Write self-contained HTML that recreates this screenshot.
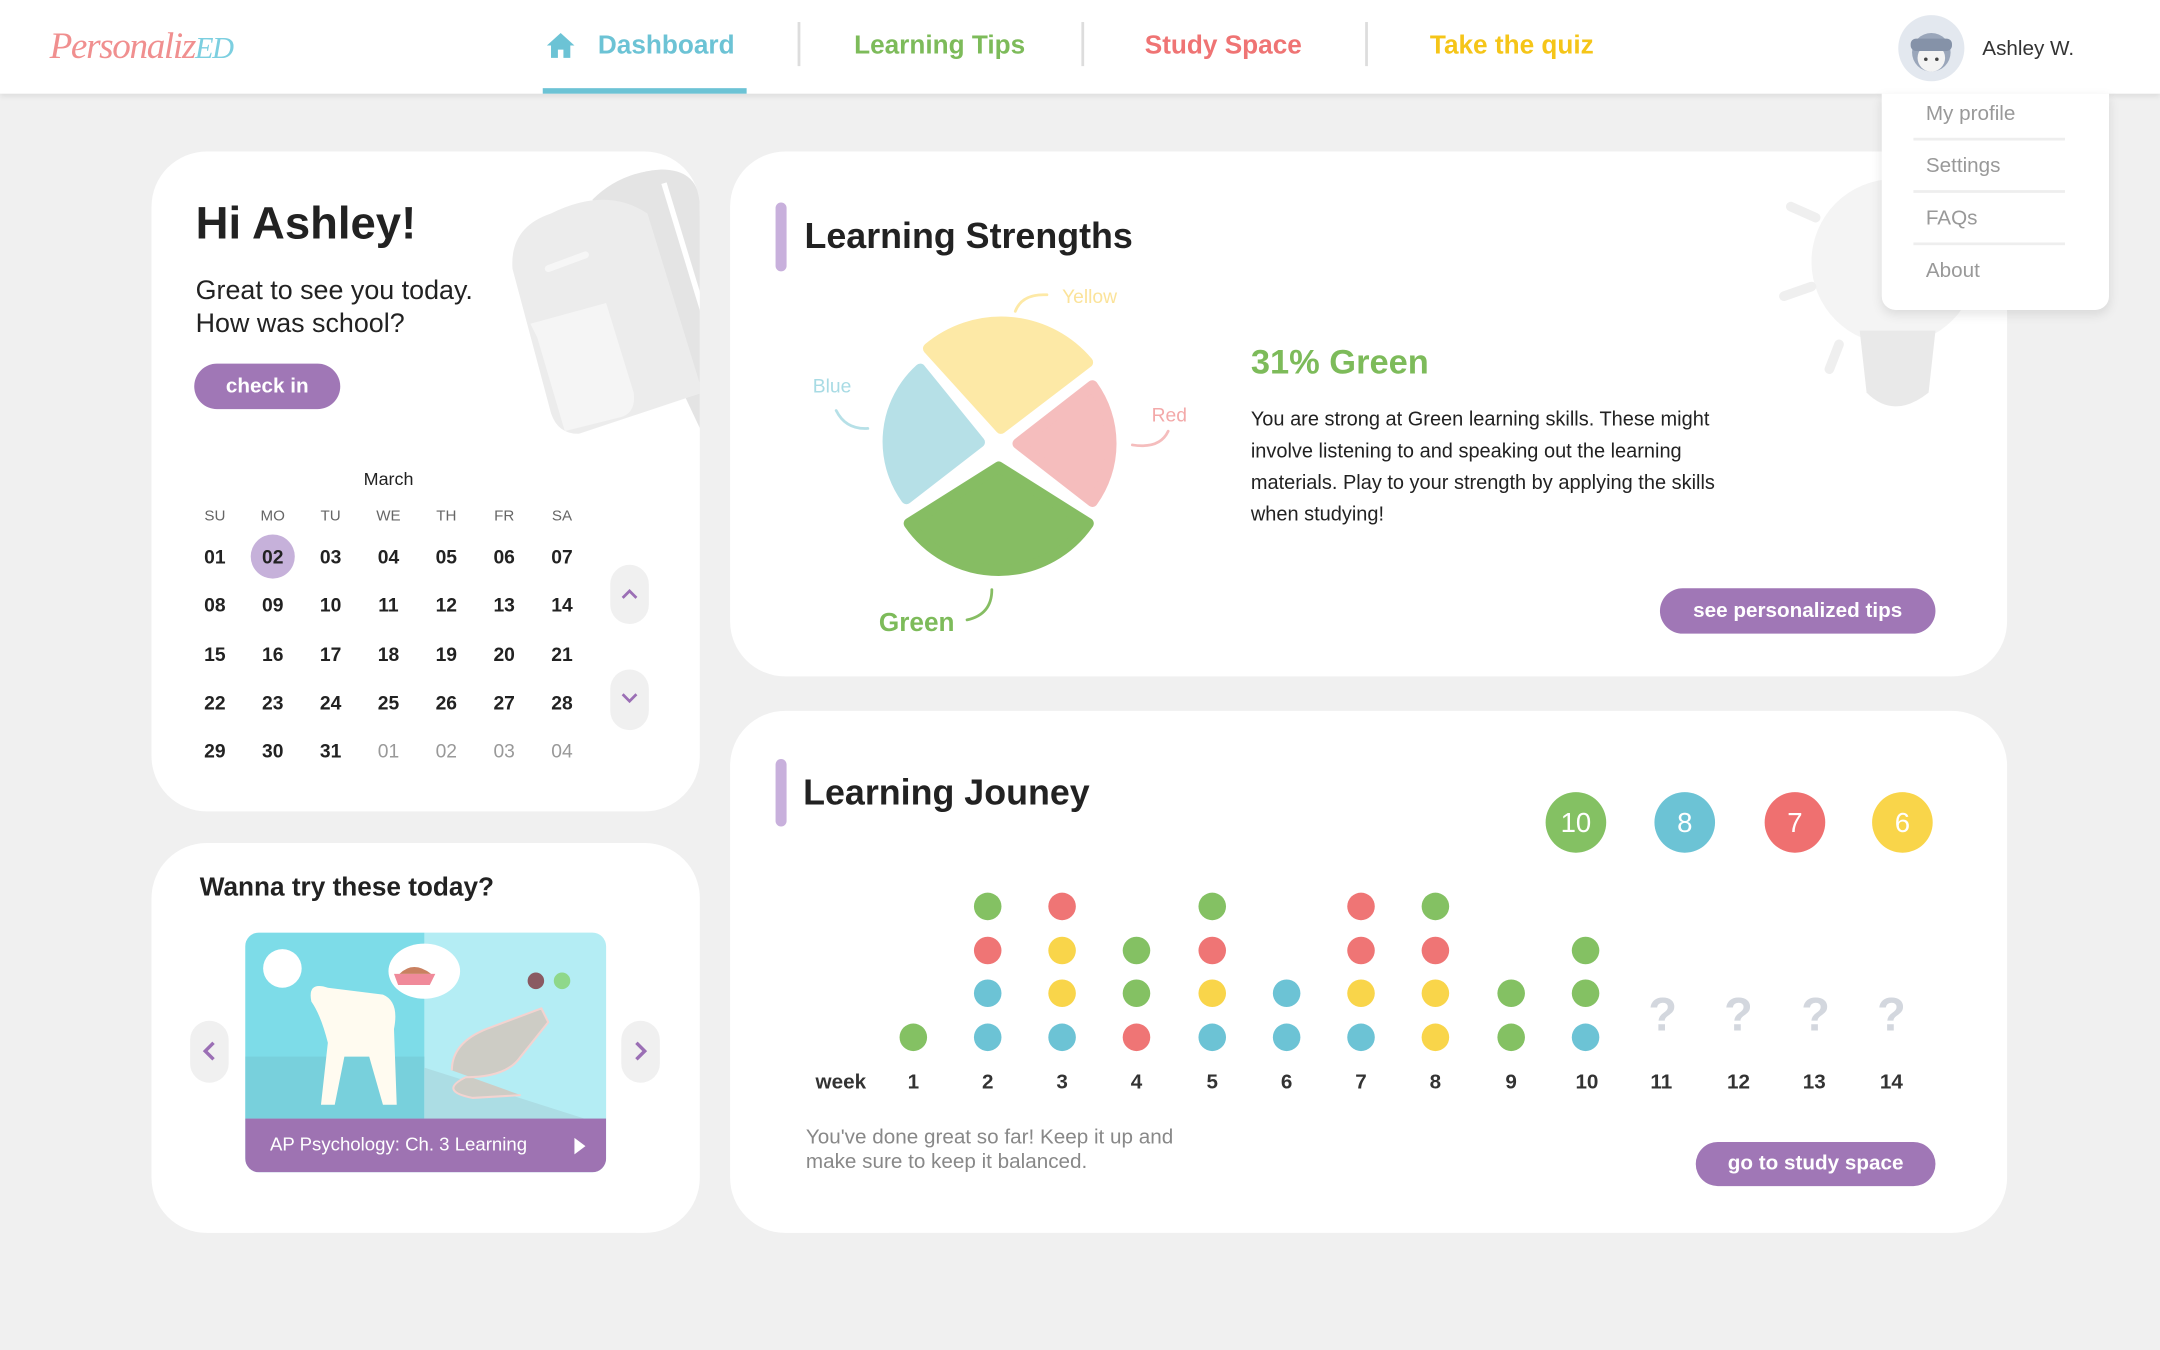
<!DOCTYPE html>
<html><head><meta charset="utf-8">
<style>
*{margin:0;padding:0;box-sizing:border-box}
html,body{width:2160px;height:1350px;overflow:hidden;background:#f0f0f0;font-family:"Liberation Sans",sans-serif}
#w{position:absolute;left:0;top:0;width:1568px;height:980px;transform:scale(1.37755);transform-origin:0 0}
.a{position:absolute;white-space:nowrap}
.card{position:absolute;background:#fff;border-radius:40px;overflow:hidden}
.btn{position:absolute;background:#a077b6;color:#fff;border-radius:17px;text-align:center;font-size:15px;font-weight:bold}
.cal{position:absolute;width:30px;text-align:center;font-size:14px;color:#222;font-weight:bold}
.dh{position:absolute;width:30px;text-align:center;font-size:11px;color:#666}
.wk{position:absolute;width:30px;text-align:center;font-size:15px;color:#333;font-weight:bold;top:777px}
.q{position:absolute;width:30px;text-align:center;font-size:34px;color:#d3d7de;font-weight:bold;top:718px}
</style></head><body><div id="w">

<!-- header -->
<div class="a" style="left:0;top:0;width:1568px;height:68px;background:#fff;box-shadow:0 2px 4px rgba(0,0,0,.08)"></div>
<div class="a" style="left:36px;top:18px;font-size:27px;color:#f08f8f;font-family:'Liberation Serif',serif;font-style:italic;letter-spacing:-1px">Personali<span style="color:#f08f8f">z</span><span style="color:#7ccfe0;font-size:22px">ED</span></div>
<svg class="a" style="left:396px;top:23px" width="22" height="20" viewBox="0 0 22 20"><path d="M11 1 L1 10 H4 V19 H9 V13 H13 V19 H18 V10 H21 Z" fill="#6cc3d5"/></svg>
<div class="a" style="left:434px;top:23px;font-size:19px;color:#6cc3d5;font-weight:bold">Dashboard</div>
<div class="a" style="left:394px;top:64px;width:148px;height:4px;background:#6cc3d5"></div>
<div class="a" style="left:579px;top:16px;width:2px;height:32px;background:#ddd"></div>
<div class="a" style="left:785px;top:16px;width:2px;height:32px;background:#ddd"></div>
<div class="a" style="left:991px;top:16px;width:2px;height:32px;background:#ddd"></div>
<div class="a" style="left:620px;top:23px;font-size:19px;color:#7dbb5a;font-weight:bold">Learning Tips</div>
<div class="a" style="left:831px;top:23px;font-size:19px;color:#ef7474;font-weight:bold">Study Space</div>
<div class="a" style="left:1038px;top:23px;font-size:19px;color:#f5c518;font-weight:bold">Take the quiz</div>
<svg class="a" style="left:1377px;top:10px" width="50" height="50" viewBox="0 0 50 50"><circle cx="25" cy="25" r="24" fill="#e3e8ef"/><circle cx="25" cy="28" r="14" fill="#9aa6ba"/><circle cx="25" cy="32" r="10" fill="#f3f3f3"/><rect x="10" y="18" width="30" height="9" rx="4" fill="#8592a8"/><circle cx="21" cy="33" r="1.3" fill="#444"/><circle cx="29" cy="33" r="1.3" fill="#444"/></svg>
<div class="a" style="left:1439px;top:27px;font-size:15px;color:#333">Ashley W.</div>

<!-- card 1 -->
<div class="card" style="left:110px;top:110px;width:398px;height:479px">
 <svg class="a" style="left:260px;top:5px" width="140" height="200" viewBox="0 0 140 200"><path d="M60 30 Q80 10 110 8 Q135 8 138 30 L140 200 Z" fill="#e4e4e4"/><path d="M30 40 Q70 20 100 40 L140 170 L50 200 Q35 200 30 185 L2 80 Q0 50 30 40 Z" fill="#ececec"/><path d="M15 120 L70 105 L90 170 Q92 185 80 188 L40 198 L20 130 Z" fill="#f5f5f5"/><path d="M28 80 L55 70" stroke="#f6f6f6" stroke-width="5" stroke-linecap="round"/><path d="M112 18 L140 110" stroke="#fff" stroke-width="4"/></svg>
 <div class="a" style="left:32px;top:33px;font-size:33px;color:#222;font-weight:bold">Hi Ashley!</div>
 <div class="a" style="left:32px;top:89px;font-size:19.5px;color:#222;line-height:24px">Great to see you today.<br>How was school?</div>
</div>
<div class="btn" style="left:141px;top:264px;width:106px;height:33px;line-height:33px">check in</div>
<div class="a" style="left:264px;top:340px;font-size:13px;color:#222">March</div>
<div class="dh" style="left:141px;top:369px">SU</div><div class="dh" style="left:183px;top:369px">MO</div><div class="dh" style="left:225px;top:369px">TU</div><div class="dh" style="left:267px;top:369px">WE</div><div class="dh" style="left:309px;top:369px">TH</div><div class="dh" style="left:351px;top:369px">FR</div><div class="dh" style="left:393px;top:369px">SA</div>
<div class="a" style="left:182px;top:388px;width:32px;height:32px;border-radius:50%;background:#c6b1da"></div>
<div class="cal" style="left:141px;top:396px">01</div><div class="cal" style="left:183px;top:396px">02</div><div class="cal" style="left:225px;top:396px">03</div><div class="cal" style="left:267px;top:396px">04</div><div class="cal" style="left:309px;top:396px">05</div><div class="cal" style="left:351px;top:396px">06</div><div class="cal" style="left:393px;top:396px">07</div>
<div class="cal" style="left:141px;top:431px">08</div><div class="cal" style="left:183px;top:431px">09</div><div class="cal" style="left:225px;top:431px">10</div><div class="cal" style="left:267px;top:431px">11</div><div class="cal" style="left:309px;top:431px">12</div><div class="cal" style="left:351px;top:431px">13</div><div class="cal" style="left:393px;top:431px">14</div>
<div class="cal" style="left:141px;top:467px">15</div><div class="cal" style="left:183px;top:467px">16</div><div class="cal" style="left:225px;top:467px">17</div><div class="cal" style="left:267px;top:467px">18</div><div class="cal" style="left:309px;top:467px">19</div><div class="cal" style="left:351px;top:467px">20</div><div class="cal" style="left:393px;top:467px">21</div>
<div class="cal" style="left:141px;top:502px">22</div><div class="cal" style="left:183px;top:502px">23</div><div class="cal" style="left:225px;top:502px">24</div><div class="cal" style="left:267px;top:502px">25</div><div class="cal" style="left:309px;top:502px">26</div><div class="cal" style="left:351px;top:502px">27</div><div class="cal" style="left:393px;top:502px">28</div>
<div class="cal" style="left:141px;top:537px">29</div><div class="cal" style="left:183px;top:537px">30</div><div class="cal" style="left:225px;top:537px">31</div><div class="cal" style="left:267px;top:537px;color:#999;font-weight:normal">01</div><div class="cal" style="left:309px;top:537px;color:#999;font-weight:normal">02</div><div class="cal" style="left:351px;top:537px;color:#999;font-weight:normal">03</div><div class="cal" style="left:393px;top:537px;color:#999;font-weight:normal">04</div>
<div class="a" style="left:443px;top:410px;width:28px;height:43px;border-radius:14px;background:#f0f0f0"></div>
<div class="a" style="left:443px;top:486px;width:28px;height:44px;border-radius:14px;background:#f0f0f0"></div>
<svg class="a" style="left:451px;top:426px" width="12" height="10"><path d="M1 8 L6 3 L11 8" stroke="#9b6fb5" stroke-width="2" fill="none"/></svg>
<svg class="a" style="left:451px;top:502px" width="12" height="10"><path d="M1 2 L6 7 L11 2" stroke="#9b6fb5" stroke-width="2" fill="none"/></svg>

<!-- card 2 -->
<div class="card" style="left:110px;top:612px;width:398px;height:283px">
 <div class="a" style="left:35px;top:22px;font-size:19px;color:#222;font-weight:bold">Wanna try these today?</div>
</div>
<div class="a" style="left:138px;top:741px;width:28px;height:45px;border-radius:14px;background:#f0f0f0"></div>
<div class="a" style="left:451px;top:741px;width:28px;height:45px;border-radius:14px;background:#f0f0f0"></div>
<svg class="a" style="left:146px;top:756px" width="12" height="14"><path d="M9 1 L3 7 L9 13" stroke="#9b6fb5" stroke-width="2.5" fill="none"/></svg>
<svg class="a" style="left:459px;top:756px" width="12" height="14"><path d="M3 1 L9 7 L3 13" stroke="#9b6fb5" stroke-width="2.5" fill="none"/></svg>
<div class="a" style="left:178px;top:677px;width:262px;height:174px;border-radius:10px;overflow:hidden;background:#b4edf4">
 <svg width="262" height="174" viewBox="0 0 262 174"><rect x="0" y="0" width="130" height="135" fill="#7ddce8"/><rect x="0" y="90" width="130" height="45" fill="#78d0dc"/><path d="M130 98 L262 140 V135 H130 Z" fill="#acdde4"/><circle cx="27" cy="26" r="14" fill="#fff"/><ellipse cx="130" cy="28" rx="26" ry="20" fill="#fff"/><path d="M108 30 H138 L134 38 H111 Z" fill="#f08a9a"/><path d="M112 30 Q122 20 135 30 Z" fill="#c98060"/><path d="M60 40 Q45 35 48 50 Q55 60 60 80 L55 125 H65 L72 90 H90 L100 125 H110 L108 70 Q112 50 100 45 Z" fill="#fffbf0"/><path d="M150 100 Q150 80 175 70 L215 55 L220 65 L200 90 Q190 105 160 105 Q140 115 165 120 L200 118" fill="#cdccc5" stroke="#f3d3d0" stroke-width="1.5"/><circle cx="211" cy="35" r="6" fill="#8a5a62"/><circle cx="230" cy="35" r="6" fill="#8fd88a"/></svg>
 <div class="a" style="left:0;top:135px;width:262px;height:39px;background:#9e73b2"></div>
 <div class="a" style="left:18px;top:146px;font-size:13.5px;color:#fff">AP Psychology: Ch. 3 Learning</div>
 <svg class="a" style="left:238px;top:148px" width="10" height="14"><path d="M1 1 L9 7 L1 13 Z" fill="#fff"/></svg>
</div>

<!-- card 3 -->
<div class="card" style="left:530px;top:110px;width:927px;height:381px">
 <svg class="a" style="left:760px;top:0" width="170" height="200" viewBox="0 0 170 200"><circle cx="85" cy="80" r="60" fill="#f4f4f4"/><path d="M60 130 H115 L110 175 Q85 195 65 175 Z" fill="#e9e9e9"/><path d="M10 40 L28 48 M5 105 L25 98 M45 140 L38 158" stroke="#efefef" stroke-width="7" stroke-linecap="round"/></svg>
</div>
<div class="a" style="left:563px;top:147px;width:8px;height:50px;border-radius:4px;background:#c8b0dc"></div>
<div class="a" style="left:584px;top:156px;font-size:26px;color:#222;font-weight:bold">Learning Strengths</div>
<svg class="a" style="left:0;top:0" width="1000" height="480" viewBox="0 0 1000 480">
 <g stroke-width="8" stroke-linejoin="round">
 <path d="M726.6 311 L674 253 A82 82 0 0 1 789.5 263 Z" fill="#fde9a6" stroke="#fde9a6"/>
 <path d="M739 322 L793 280 A72 72 0 0 1 793 364 Z" fill="#f5bdbd" stroke="#f5bdbd"/>
 <path d="M725 339 L790 380 A79 79 0 0 1 660 380 Z" fill="#86bd63" stroke="#86bd63"/>
 <path d="M711 321 L658 362 A71 71 0 0 1 668 268 Z" fill="#b6e0e7" stroke="#b6e0e7"/>
 </g>
 <g fill="none" stroke-width="2" stroke-linecap="round">
 <path d="M737 226 Q742 213 760 214" stroke="#fde9a6"/>
 <path d="M607 298 Q614 312 630 311" stroke="#b6e0e7"/>
 <path d="M822 323 Q842 326 848 313" stroke="#f5bdbd"/>
 <path d="M720 428 Q720 446 702 450" stroke="#86bd63"/>
 </g>
 <text x="771" y="220" font-size="14" fill="#fbe39a" font-family="Liberation Sans">Yellow</text>
 <text x="590" y="285" font-size="14" fill="#a8dbe4" font-family="Liberation Sans">Blue</text>
 <text x="836" y="306" font-size="14" fill="#f3a9a9" font-family="Liberation Sans">Red</text>
 <text x="638" y="458" font-size="19" fill="#7dbb5a" font-weight="bold" font-family="Liberation Sans">Green</text>
</svg>
<div class="a" style="left:908px;top:249px;font-size:25px;color:#7dbb5a;font-weight:bold">31% Green</div>
<div class="a" style="left:908px;top:294px;font-size:14.5px;color:#222;line-height:23px;white-space:normal;width:368px">You are strong at Green learning skills. These might involve listening to and speaking out the learning materials. Play to your strength by applying the skills when studying!</div>
<div class="btn" style="left:1205px;top:427px;width:200px;height:33px;line-height:33px">see personalized tips</div>

<!-- dropdown -->
<div class="a" style="left:1366px;top:68px;width:165px;height:157px;background:#fff;border-radius:0 0 10px 10px;box-shadow:0 3px 8px rgba(0,0,0,.1)"></div>
<div class="a" style="left:1398px;top:74px;font-size:15px;color:#999">My profile</div>
<div class="a" style="left:1389px;top:100px;width:110px;height:2px;background:#eee"></div>
<div class="a" style="left:1398px;top:112px;font-size:15px;color:#999">Settings</div>
<div class="a" style="left:1389px;top:138px;width:110px;height:2px;background:#eee"></div>
<div class="a" style="left:1398px;top:150px;font-size:15px;color:#999">FAQs</div>
<div class="a" style="left:1389px;top:176px;width:110px;height:2px;background:#eee"></div>
<div class="a" style="left:1398px;top:188px;font-size:15px;color:#999">About</div>

<!-- card 4 -->
<div class="card" style="left:530px;top:516px;width:927px;height:379px"></div>
<div class="a" style="left:563px;top:551px;width:8px;height:49px;border-radius:4px;background:#c8b0dc"></div>
<div class="a" style="left:583px;top:560px;font-size:26px;color:#222;font-weight:bold">Learning Jouney</div>
<svg class="a" style="left:0;top:0" width="1568" height="980" viewBox="0 0 1568 980">
 <g font-family="Liberation Sans" font-size="20" fill="#fff" text-anchor="middle">
 <circle cx="1144" cy="597" r="22" fill="#84c163"/><text x="1144" y="604">10</text>
 <circle cx="1223" cy="597" r="22" fill="#6cc3d5"/><text x="1223" y="604">8</text>
 <circle cx="1303" cy="597" r="22" fill="#ef7070"/><text x="1303" y="604">7</text>
 <circle cx="1381" cy="597" r="22" fill="#f9d54a"/><text x="1381" y="604">6</text>
 </g>
 <g>
 <circle cx="663" cy="753" r="10" fill="#84c163"/>
 <circle cx="717" cy="658" r="10" fill="#84c163"/><circle cx="717" cy="690" r="10" fill="#ef7575"/><circle cx="717" cy="721" r="10" fill="#6cc3d5"/><circle cx="717" cy="753" r="10" fill="#6cc3d5"/>
 <circle cx="771" cy="658" r="10" fill="#ef7575"/><circle cx="771" cy="690" r="10" fill="#f9d54a"/><circle cx="771" cy="721" r="10" fill="#f9d54a"/><circle cx="771" cy="753" r="10" fill="#6cc3d5"/>
 <circle cx="825" cy="690" r="10" fill="#84c163"/><circle cx="825" cy="721" r="10" fill="#84c163"/><circle cx="825" cy="753" r="10" fill="#ef7575"/>
 <circle cx="880" cy="658" r="10" fill="#84c163"/><circle cx="880" cy="690" r="10" fill="#ef7575"/><circle cx="880" cy="721" r="10" fill="#f9d54a"/><circle cx="880" cy="753" r="10" fill="#6cc3d5"/>
 <circle cx="934" cy="721" r="10" fill="#6cc3d5"/><circle cx="934" cy="753" r="10" fill="#6cc3d5"/>
 <circle cx="988" cy="658" r="10" fill="#ef7575"/><circle cx="988" cy="690" r="10" fill="#ef7575"/><circle cx="988" cy="721" r="10" fill="#f9d54a"/><circle cx="988" cy="753" r="10" fill="#6cc3d5"/>
 <circle cx="1042" cy="658" r="10" fill="#84c163"/><circle cx="1042" cy="690" r="10" fill="#ef7575"/><circle cx="1042" cy="721" r="10" fill="#f9d54a"/><circle cx="1042" cy="753" r="10" fill="#f9d54a"/>
 <circle cx="1097" cy="721" r="10" fill="#84c163"/><circle cx="1097" cy="753" r="10" fill="#84c163"/>
 <circle cx="1151" cy="690" r="10" fill="#84c163"/><circle cx="1151" cy="721" r="10" fill="#84c163"/><circle cx="1151" cy="753" r="10" fill="#6cc3d5"/>
 </g>
</svg>
<div class="q" style="left:1192px">?</div><div class="q" style="left:1247px">?</div><div class="q" style="left:1303px">?</div><div class="q" style="left:1358px">?</div>
<div class="a" style="left:592px;top:777px;font-size:15px;color:#333;font-weight:bold">week</div>
<div class="wk" style="left:648px">1</div><div class="wk" style="left:702px">2</div><div class="wk" style="left:756px">3</div><div class="wk" style="left:810px">4</div><div class="wk" style="left:865px">5</div><div class="wk" style="left:919px">6</div><div class="wk" style="left:973px">7</div><div class="wk" style="left:1027px">8</div><div class="wk" style="left:1082px">9</div><div class="wk" style="left:1137px">10</div><div class="wk" style="left:1191px">11</div><div class="wk" style="left:1247px">12</div><div class="wk" style="left:1302px">13</div><div class="wk" style="left:1358px">14</div>
<div class="a" style="left:585px;top:817px;font-size:15px;color:#888;line-height:18px">You've done great so far! Keep it up and<br>make sure to keep it balanced.</div>
<div class="btn" style="left:1231px;top:829px;width:174px;height:32px;line-height:32px">go to study space</div>

</div></body></html>
